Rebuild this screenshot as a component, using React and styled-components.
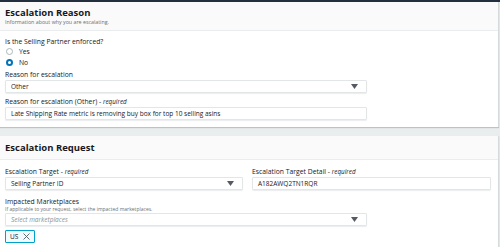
import React from "react"
import styled, { createGlobalStyle } from "styled-components"

const Global = createGlobalStyle`
    html, body {
        margin: 0;
        padding: 0;
        background: #ffffff;
        font-family: "Open Sans", "Noto Sans", sans-serif;
        color: #16191f;
    }
`

function Caret() {
    return (
        <svg width="7" height="5" viewBox="0 0 7 5">
            <path d="M0 0 H7 L3.5 5 Z" fill="#545b64" />
        </svg>
    )
}

function Radio({ checked, label }) {
    return (
        <RadioRow>
            <RadioDot checked={checked} />
            <RadioLabel>{label}</RadioLabel>
        </RadioRow>
    )
}

export default function App() {
    return (
        <Page>
            <Global />
            <TopBar />
            <Panel>
                <Header>
                    <Title>Escalation Reason</Title>
                    <Subtitle>Information about why you are escalating.</Subtitle>
                </Header>
                <Body gap="4px" top="6px">
                    <Field>
                        <Label>Is the Selling Partner enforced?</Label>
                        <RadioGroup>
                            <Radio label="Yes" />
                            <Radio label="No" checked />
                        </RadioGroup>
                    </Field>
                    <Field>
                        <Label>Reason for escalation</Label>
                        <Select width="362px">
                            <span>Other</span>
                            <Caret />
                        </Select>
                    </Field>
                    <Field>
                        <Label>Reason for escalation (Other) - <em>required</em></Label>
                        <Input width="362px">Late Shipping Rate metric is removing buy box for top 10 selling asins</Input>
                    </Field>
                </Body>
            </Panel>
            <Gap />
            <Panel>
                <Header compact>
                    <Title>Escalation Request</Title>
                </Header>
                <Body gap="7px" top="7px">
                    <Columns>
                        <Field>
                            <Label>Escalation Target - <em>required</em></Label>
                            <Select>
                                <span>Selling Partner ID</span>
                                <Caret />
                            </Select>
                        </Field>
                        <Field>
                            <Label>Escalation Target Detail - <em>required</em></Label>
                            <Input>A182AWQ2TN1RQR</Input>
                        </Field>
                    </Columns>
                    <Field>
                        <Label>Impacted Marketplaces</Label>
                        <Hint>If applicable to your request, select the impacted marketplaces.</Hint>
                        <Select width="362px">
                            <Placeholder>Select marketplaces</Placeholder>
                            <Caret />
                        </Select>
                    </Field>
                    <Token>
                        US
                        <svg width="7" height="7" viewBox="0 0 7 7">
                            <path d="M0.5 0.5 L6.5 6.5 M6.5 0.5 L0.5 6.5" stroke="#545b64" strokeWidth="0.9" />
                        </svg>
                    </Token>
                </Body>
            </Panel>
        </Page>
    )
}

const Page = styled.div`
    width: 500px;
    height: 247px;
    overflow: hidden;
    background: #eaeded;
`
const TopBar = styled.div`
    height: 2px;
    background: #232f3e;
`
const Panel = styled.section`
    background: #ffffff;
    border-right: 1px solid #d5dbdb;
    width: 498px;
    box-shadow: 0 1px 1px rgba(0, 28, 36, 0.2);
`
const Header = styled.div`
    background: #fafafa;
    border-bottom: 1px solid #eaeded;
    padding: ${p => p.compact ? "7px 5px 7px" : "5px 5px 5px"};
    height: ${p => p.compact ? "9px" : "18px"};
    display: flex;
    flex-direction: column;
    justify-content: center;
`
const Title = styled.div`
    font-size: 9.5px;
    font-weight: 700;
    line-height: 11px;
`
const Subtitle = styled.div`
    font-size: 5.3px;
    color: #687078;
    line-height: 7px;
    margin-top: 1px;
`
const Body = styled.div`
    padding: ${p => p.top} 5px 7px;
    display: flex;
    flex-direction: column;
    gap: ${p => p.gap};
`
const Columns = styled.div`
    display: grid;
    grid-template-columns: 238px 239px;
    column-gap: 9px;
`
const Field = styled.div`
    display: flex;
    flex-direction: column;
`
const Label = styled.div`
    font-size: 6.8px;
    line-height: 9px;
    margin-bottom: 1px;
    em {
        font-style: italic;
        font-size: 6.3px;
    }
`
const Hint = styled.div`
    font-size: 5px;
    line-height: 6px;
    color: #687078;
    margin-top: -1px;
    margin-bottom: 1px;
`
const RadioGroup = styled.div`
    display: flex;
    flex-direction: column;
    gap: 4px;
    margin-top: 1px;
`
const RadioRow = styled.div`
    display: flex;
    align-items: center;
    gap: 6px;
    height: 7px;
    padding-left: 1px;
`
const RadioDot = styled.span`
    box-sizing: border-box;
    width: 7px;
    height: 7px;
    border-radius: 50%;
    border: ${p => p.checked ? "2px solid #0073bb" : "1px solid #aab7b8"};
    background: #ffffff;
`
const RadioLabel = styled.span`
    font-size: 6.8px;
`
const Select = styled.div`
    box-sizing: border-box;
    width: ${p => p.width || "100%"};
    height: 13px;
    border: 1px solid #e3e6e6;
    border-radius: 1px;
    box-shadow: 0 1px 1px rgba(0, 28, 36, 0.08);
    display: flex;
    align-items: center;
    justify-content: space-between;
    padding: 0 8px 0 5px;
    font-size: 6.5px;
`
const Input = styled.div`
    box-sizing: border-box;
    width: ${p => p.width || "100%"};
    height: 13px;
    border: 1px solid #e3e6e6;
    border-radius: 1px;
    box-shadow: 0 1px 1px rgba(0, 28, 36, 0.08);
    display: flex;
    align-items: center;
    padding: 0 5px;
    font-size: 6.5px;
`
const Placeholder = styled.span`
    color: #879596;
    font-style: italic;
`
const Gap = styled.div`
    height: 9px;
`
const Token = styled.div`
    box-sizing: border-box;
    align-self: flex-start;
    display: flex;
    align-items: center;
    gap: 5px;
    height: 13px;
    padding: 0 4px 0 4px;
    background: #f1faff;
    border: 1px solid #00a1c9;
    border-radius: 1px;
    font-size: 6.5px;
    margin-top: -3px;
`
